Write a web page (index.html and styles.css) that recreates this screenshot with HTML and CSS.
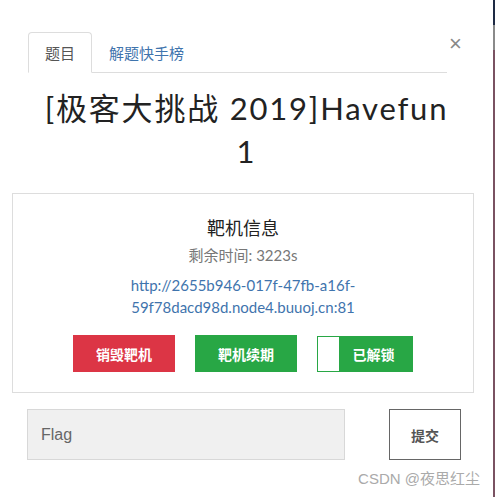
FILE: index.html
```html
<!DOCTYPE html>
<html lang="zh-CN">
<head>
  <meta charset="UTF-8">
  <title>[极客大挑战 2019]Havefun 1</title>
  <link rel="stylesheet" href="styles.css">
</head>
<body>
  <div class="modal">
    <div class="modal-header">
      <ul class="tabs">
        <li class="tab active">题目</li>
        <li class="tab">解题快手榜</li>
      </ul>
      <span class="close">&times;</span>
    </div>

    <h1 class="title">[极客大挑战 2019]Havefun 1</h1>

    <div class="card">
      <div class="card-title">靶机信息</div>
      <div class="remain">剩余时间: 3223s</div>
      <a class="target-link" href="#">http://2655b946-017f-47fb-a16f-59f78dacd98d.node4.buuoj.cn:81</a>
      <div class="actions">
        <button class="btn btn-red">销毁靶机</button>
        <button class="btn btn-green">靶机续期</button>
        <button class="btn btn-unlock"><span class="knob"></span><span class="label">已解锁</span></button>
      </div>
    </div>

    <div class="flag-row">
      <input type="text" class="flag-input" placeholder="Flag">
      <button class="submit">提交</button>
    </div>

    <div class="watermark">CSDN @夜思红尘</div>
  </div>
  <div class="edge"></div>
</body>
</html>
```

FILE: styles.css
```css
body {
  margin: 0;
  height: 497px;
  display: flex;
  background: #fff;
  font-family: Lato, "Noto Sans CJK SC", sans-serif;
  color: #333;
  overflow: hidden;
}

.modal {
  flex: 1;
  display: flex;
  flex-direction: column;
}

.edge {
  width: 2px;
  background: linear-gradient(#1e2a44 0, #1e2a44 25px, #8a8a8a 25px, #8a8a8a 50px, #7a5262 50px);
}

.modal-header {
  display: flex;
  align-items: flex-start;
  padding: 32px 0 0 28px;
}

.tabs {
  list-style: none;
  margin: 0;
  padding: 0;
  width: 419px;
  display: flex;
  border-bottom: 1px solid #ddd;
}

.tab {
  padding: 0 16px;
  height: 39px;
  line-height: 40px;
  font-size: 15px;
  color: #3f74ad;
  margin-bottom: -1px;
  border: 1px solid transparent;
}

.tab.active {
  color: #555;
  border-color: #ddd;
  border-bottom-color: #fff;
  border-radius: 4px 4px 0 0;
  background: #fff;
}

.close {
  margin: 1px 0 0 2px;
  font-family: "Liberation Sans", sans-serif;
  font-size: 22px;
  line-height: 22px;
  color: #888;
}

.title {
  margin: 14px 40px 0;
  font-size: 31px;
  font-weight: normal;
  line-height: 43px;
  text-align: center;
  color: #222;
  letter-spacing: 1.8px;
}

.card {
  margin: 20px 19px 0 12px;
  border: 1px solid #ddd;
  padding: 20px 0 20px;
  display: flex;
  flex-direction: column;
  align-items: center;
}

.card-title {
  font-size: 18px;
  line-height: 28px;
  color: #222;
}

.remain {
  font-size: 15px;
  line-height: 22px;
  color: #777;
  margin-top: 2px;
}

.target-link {
  width: 250px;
  margin-top: 8px;
  font-size: 15px;
  line-height: 22px;
  color: #3f74ad;
  text-align: center;
  text-decoration: none;
}

.actions {
  display: flex;
  gap: 20px;
  margin-top: 17px;
}

.btn {
  width: 102px;
  height: 37px;
  border: none;
  border-radius: 0;
  font-family: "Noto Sans CJK SC", sans-serif;
  font-size: 14px;
  font-weight: bold;
  color: #fff;
  padding: 0;
}

.btn-red {
  background: #dc3545;
}

.btn-green {
  background: #28a745;
}

.btn-unlock {
  width: 96px;
  height: 36px;
  margin-top: 1px;
  display: flex;
  background: #28a745;
  border: 1px solid #28a745;
}

.btn-unlock .knob {
  width: 21px;
  height: 100%;
  background: #fff;
}

.btn-unlock .label {
  flex: 1;
  line-height: 34px;
  text-align: center;
  padding-right: 4px;
}

.flag-row {
  display: flex;
  align-items: flex-start;
  margin: 16px 0 0 27px;
}

.flag-input {
  width: 318px;
  height: 51px;
  box-sizing: border-box;
  border: 1px solid #d8d8d8;
  background: #f0f0f0;
  padding: 0 13px;
  font-family: "Liberation Sans", sans-serif;
  font-size: 16px;
  outline: none;
}

.flag-input::placeholder {
  color: #666;
}

.submit {
  margin-left: 44px;
  width: 72px;
  height: 51px;
  background: #fff;
  border: 1px solid #666;
  font-family: "Noto Sans CJK SC", sans-serif;
  font-size: 14px;
  font-weight: bold;
  color: #555;
}

.watermark {
  align-self: flex-end;
  margin: 7px 13px 0 0;
  font-family: "Liberation Sans", "Noto Sans CJK SC", sans-serif;
  font-size: 15px;
  color: #aaa;
}
```
